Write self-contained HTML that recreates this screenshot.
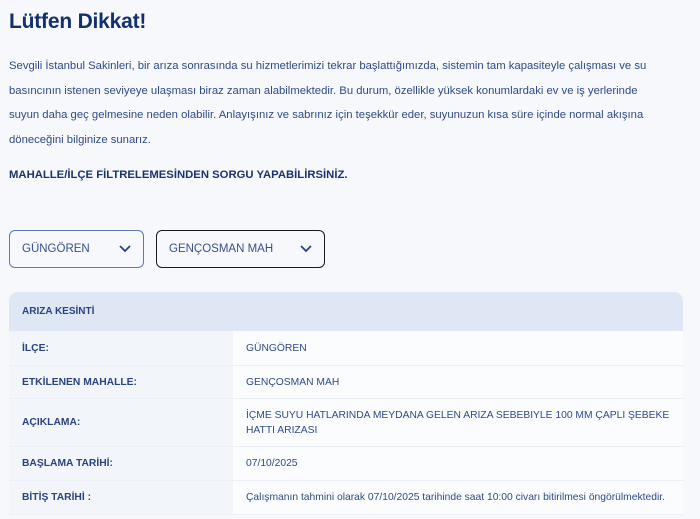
<!DOCTYPE html>
<html><head><meta charset="utf-8"><style>
*{margin:0;padding:0;box-sizing:border-box}
body{width:700px;height:519px;overflow:hidden;background:#f6f8fc;font-family:"Liberation Sans",sans-serif;color:#2a4480;position:relative}
h1{position:absolute;left:9px;top:10px;font-size:21px;font-weight:bold;color:#13306e;letter-spacing:-0.2px}
p{position:absolute;left:9px;top:54px;width:690px;font-size:11.3px;line-height:24.5px;color:#2f4a86;white-space:nowrap}
.b{position:absolute;left:9px;top:169px;font-size:11.3px;font-weight:bold;color:#1a336f}
.sel{position:absolute;top:230px;height:38px;border-radius:6px;font-size:11.5px;display:flex;align-items:center;padding-left:12px;color:#3a5088}
.sel svg{position:absolute;right:12px;top:14px}
.t{position:absolute;left:9px;top:292px;width:674px}
.h{height:39px;background:#dfe7f5;border-radius:9px 9px 0 0;font-size:10px;font-weight:bold;padding:14px 0 0 13px;color:#2a4480}
.r{display:flex;border-bottom:1px solid #eceff5;font-size:10.3px}
.r div:first-child{width:224px;background:#f2f5fa;padding-left:13px;font-weight:bold;color:#2a4480}
.r div:last-child{flex:1;background:#fbfcfe;padding-left:13px;color:#2f4a86;line-height:15px}
.r div{display:flex;align-items:center}
</style></head><body>
<h1>Lütfen Dikkat!</h1>
<p>Sevgili İstanbul Sakinleri, bir arıza sonrasında su hizmetlerimizi tekrar başlattığımızda, sistemin tam kapasiteyle çalışması ve su<br>basıncının istenen seviyeye ulaşması biraz zaman alabilmektedir. Bu durum, özellikle yüksek konumlardaki ev ve iş yerlerinde<br>suyun daha geç gelmesine neden olabilir. Anlayışınız ve sabrınız için teşekkür eder, suyunuzun kısa süre içinde normal akışına<br>döneceğini bilginize sunarız.</p>
<div class="b">MAHALLE/İLÇE FİLTRELEMESİNDEN SORGU YAPABİLİRSİNİZ.</div>
<div class="sel" style="left:9px;width:135px;border:1px solid #5d79b0">GÜNGÖREN<svg width="12" height="8" viewBox="0 0 12 8"><path d="M1 1l5 5 5-5" fill="none" stroke="#2a4480" stroke-width="1.8"/></svg></div>
<div class="sel" style="left:156px;width:169px;border:1.5px solid #1a1a1a">GENÇOSMAN MAH<svg width="12" height="8" viewBox="0 0 12 8"><path d="M1 1l5 5 5-5" fill="none" stroke="#2a4480" stroke-width="1.8"/></svg></div>
<div class="t">
<div class="h">ARIZA KESİNTİ</div>
<div class="r" style="height:35px"><div>İLÇE:</div><div>GÜNGÖREN</div></div>
<div class="r" style="height:33px"><div>ETKİLENEN MAHALLE:</div><div>GENÇOSMAN MAH</div></div>
<div class="r" style="height:48px"><div>AÇIKLAMA:</div><div>İÇME SUYU HATLARINDA MEYDANA GELEN ARIZA SEBEBIYLE 100 MM ÇAPLI ŞEBEKE<br>HATTI ARIZASI</div></div>
<div class="r" style="height:34px"><div>BAŞLAMA TARİHİ:</div><div>07/10/2025</div></div>
<div class="r" style="height:34px"><div>BİTİŞ TARİHİ :</div><div>Çalışmanın tahmini olarak 07/10/2025 tarihinde saat 10:00 civarı bitirilmesi öngörülmektedir.</div></div>
</div>
</body></html>
